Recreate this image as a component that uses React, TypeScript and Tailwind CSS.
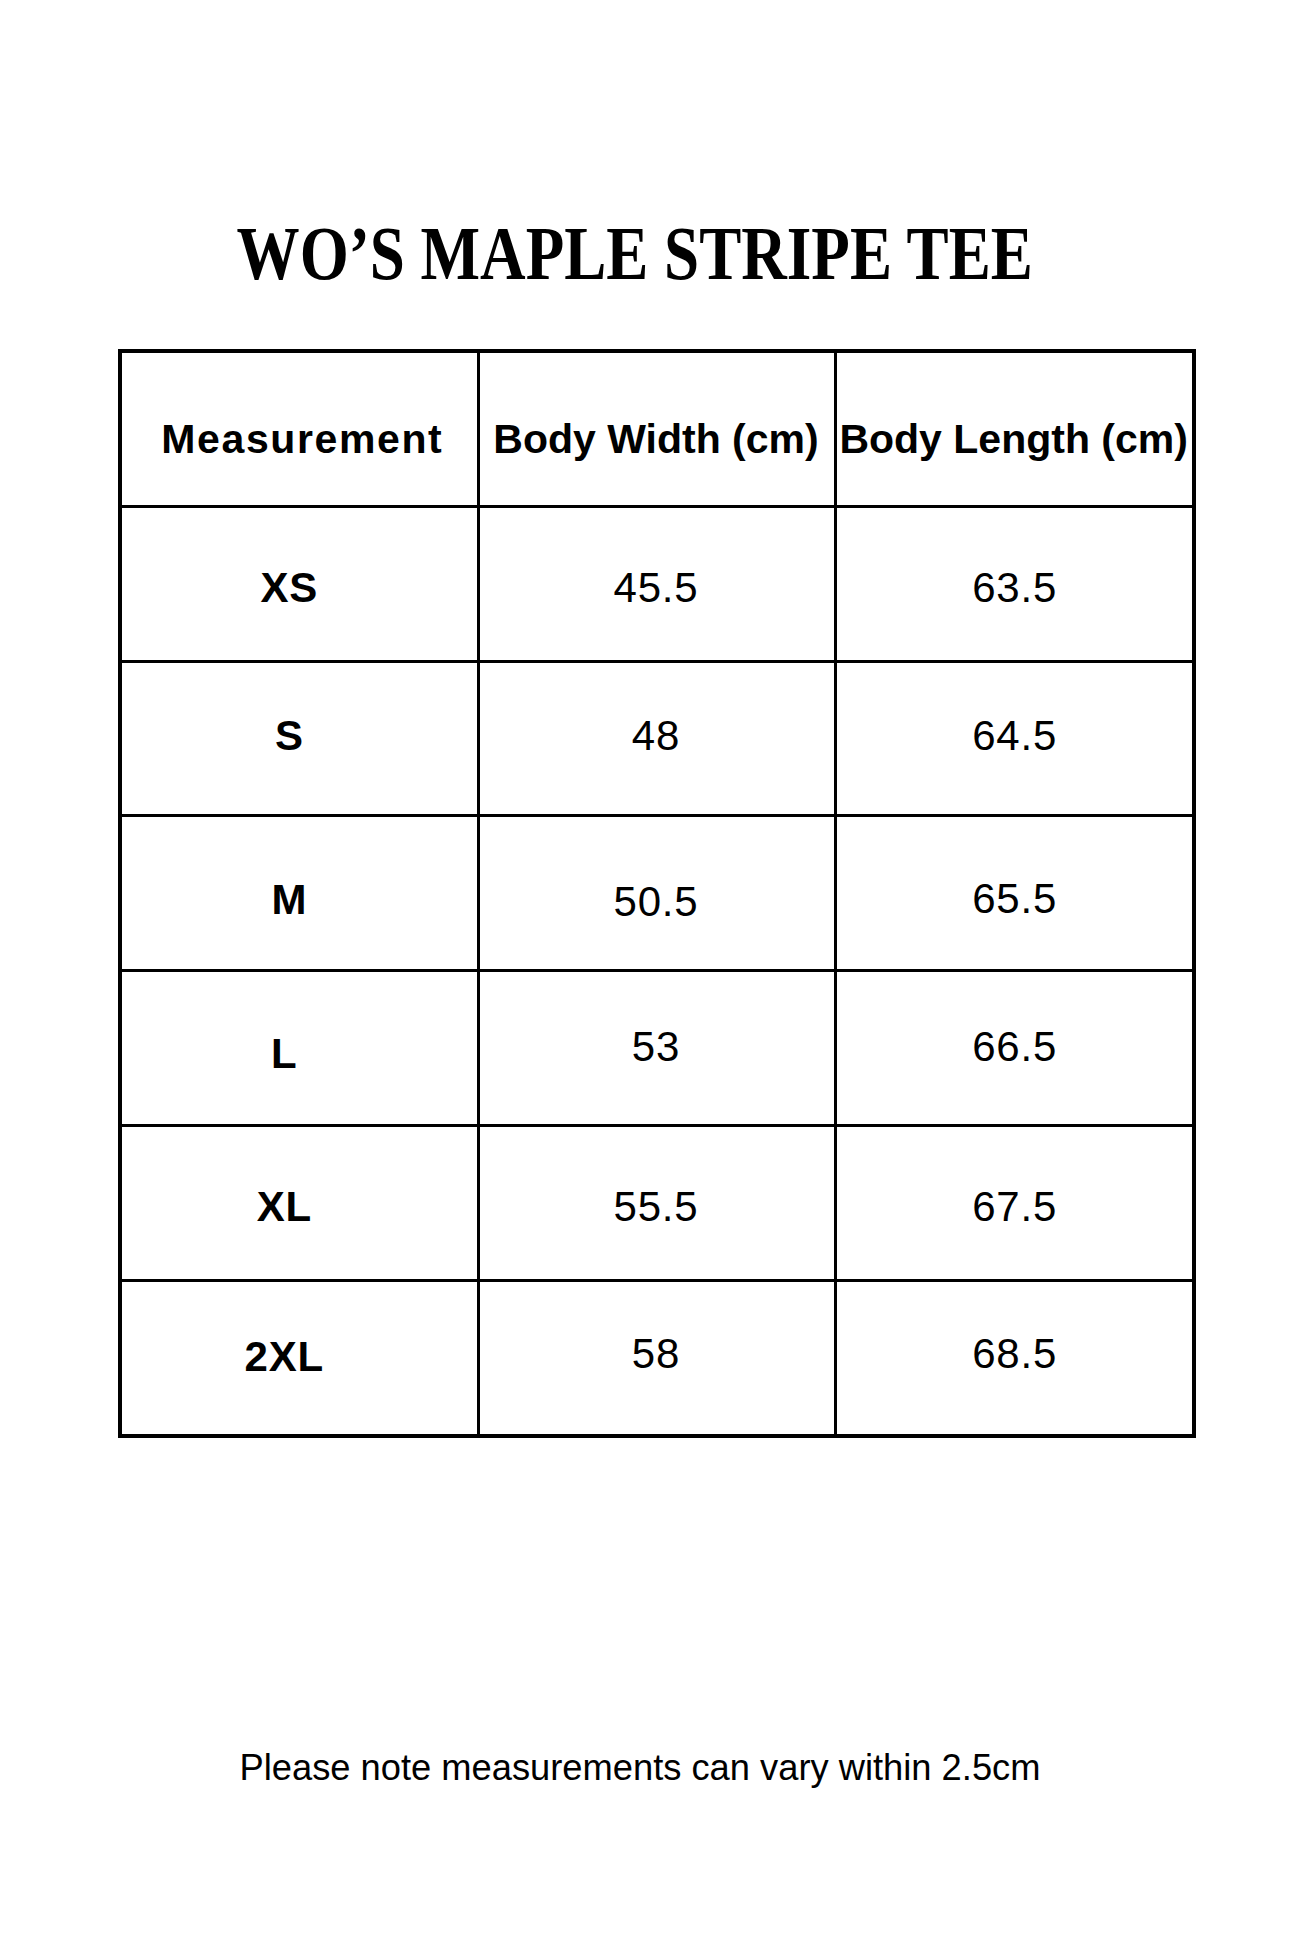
import React from "react";

type Cell = { text: string; bold: boolean; cls: string; tcls?: string };

const sans = "font-['Liberation_Sans',Arial,Helvetica,sans-serif]";

const header: Cell[] = [
  { text: "Measurement", bold: true, cls: "pt-[22px] pl-[6px]", tcls: "tracking-[1.6px]" },
  { text: "Body Width (cm)", bold: true, cls: "pt-[22px] pr-[2px]" },
  { text: "Body Length (cm)", bold: true, cls: "pt-[22px] pr-[2px]" },
];

const rows: Cell[][] = [
  [
    { text: "XS", bold: true, cls: "pt-[8px] pr-[20px]" },
    { text: "45.5", bold: false, cls: "pt-[8px] pr-[2px]" },
    { text: "63.5", bold: false, cls: "pt-[8px]" },
  ],
  [
    { text: "S", bold: true, cls: "pb-[4px] pr-[20px]" },
    { text: "48", bold: false, cls: "pb-[4px] pr-[2px]" },
    { text: "64.5", bold: false, cls: "pb-[4px]" },
  ],
  [
    { text: "M", bold: true, cls: "pt-[14px] pr-[20px]" },
    { text: "50.5", bold: false, cls: "pt-[18px] pr-[2px]" },
    { text: "65.5", bold: false, cls: "pt-[12px]" },
  ],
  [
    { text: "L", bold: true, cls: "pt-[12px] pr-[30px]" },
    { text: "53", bold: false, cls: "pb-[2px] pr-[2px]" },
    { text: "66.5", bold: false, cls: "pb-[2px]" },
  ],
  [
    { text: "XL", bold: true, cls: "pt-[8px] pr-[30px]" },
    { text: "55.5", bold: false, cls: "pt-[8px] pr-[2px]" },
    { text: "67.5", bold: false, cls: "pt-[8px]" },
  ],
  [
    { text: "2XL", bold: true, cls: "pb-[2px] pr-[30px]" },
    { text: "58", bold: false, cls: "pb-[8px] pr-[2px]" },
    { text: "68.5", bold: false, cls: "pb-[8px]" },
  ],
];

function TableCell({ cell, isHeader }: { cell: Cell; isHeader: boolean }) {
  return (
    <div
      className={`bg-white h-[151.8px] flex items-center justify-center ${cell.cls}`}
    >
      <span
        className={`${sans} leading-none whitespace-nowrap text-black ${
          isHeader ? "text-[41px]" : "text-[42px] tracking-[0.8px]"
        } ${cell.bold ? "font-bold" : "font-normal"} ${cell.tcls ?? ""}`}
      >
        {cell.text}
      </span>
    </div>
  );
}

export default function App() {
  return (
    <div className="w-[1296px] h-[1944px] bg-white flex flex-col">
      <div className="pt-[215px] flex justify-center pr-[26px]">
        <h1 className="font-['Liberation_Serif','Times_New_Roman',serif] font-bold text-[76px] leading-none text-black whitespace-nowrap scale-x-[0.83]">
          WO’S MAPLE STRIPE TEE
        </h1>
      </div>

      <div className="mt-[58px] ml-[118px] w-[1078px] bg-black p-[4px] grid grid-cols-3 gap-[3px]">
        {header.map((c, i) => (
          <TableCell key={`h${i}`} cell={c} isHeader={true} />
        ))}
        {rows.map((r, ri) =>
          r.map((c, ci) => (
            <TableCell key={`r${ri}c${ci}`} cell={c} isHeader={false} />
          ))
        )}
      </div>

      <div className="mt-[312px] flex justify-center pr-[16px]">
        <p className={`${sans} text-[36.3px] leading-none text-black whitespace-nowrap`}>
          Please note measurements can vary within 2.5cm
        </p>
      </div>
    </div>
  );
}
